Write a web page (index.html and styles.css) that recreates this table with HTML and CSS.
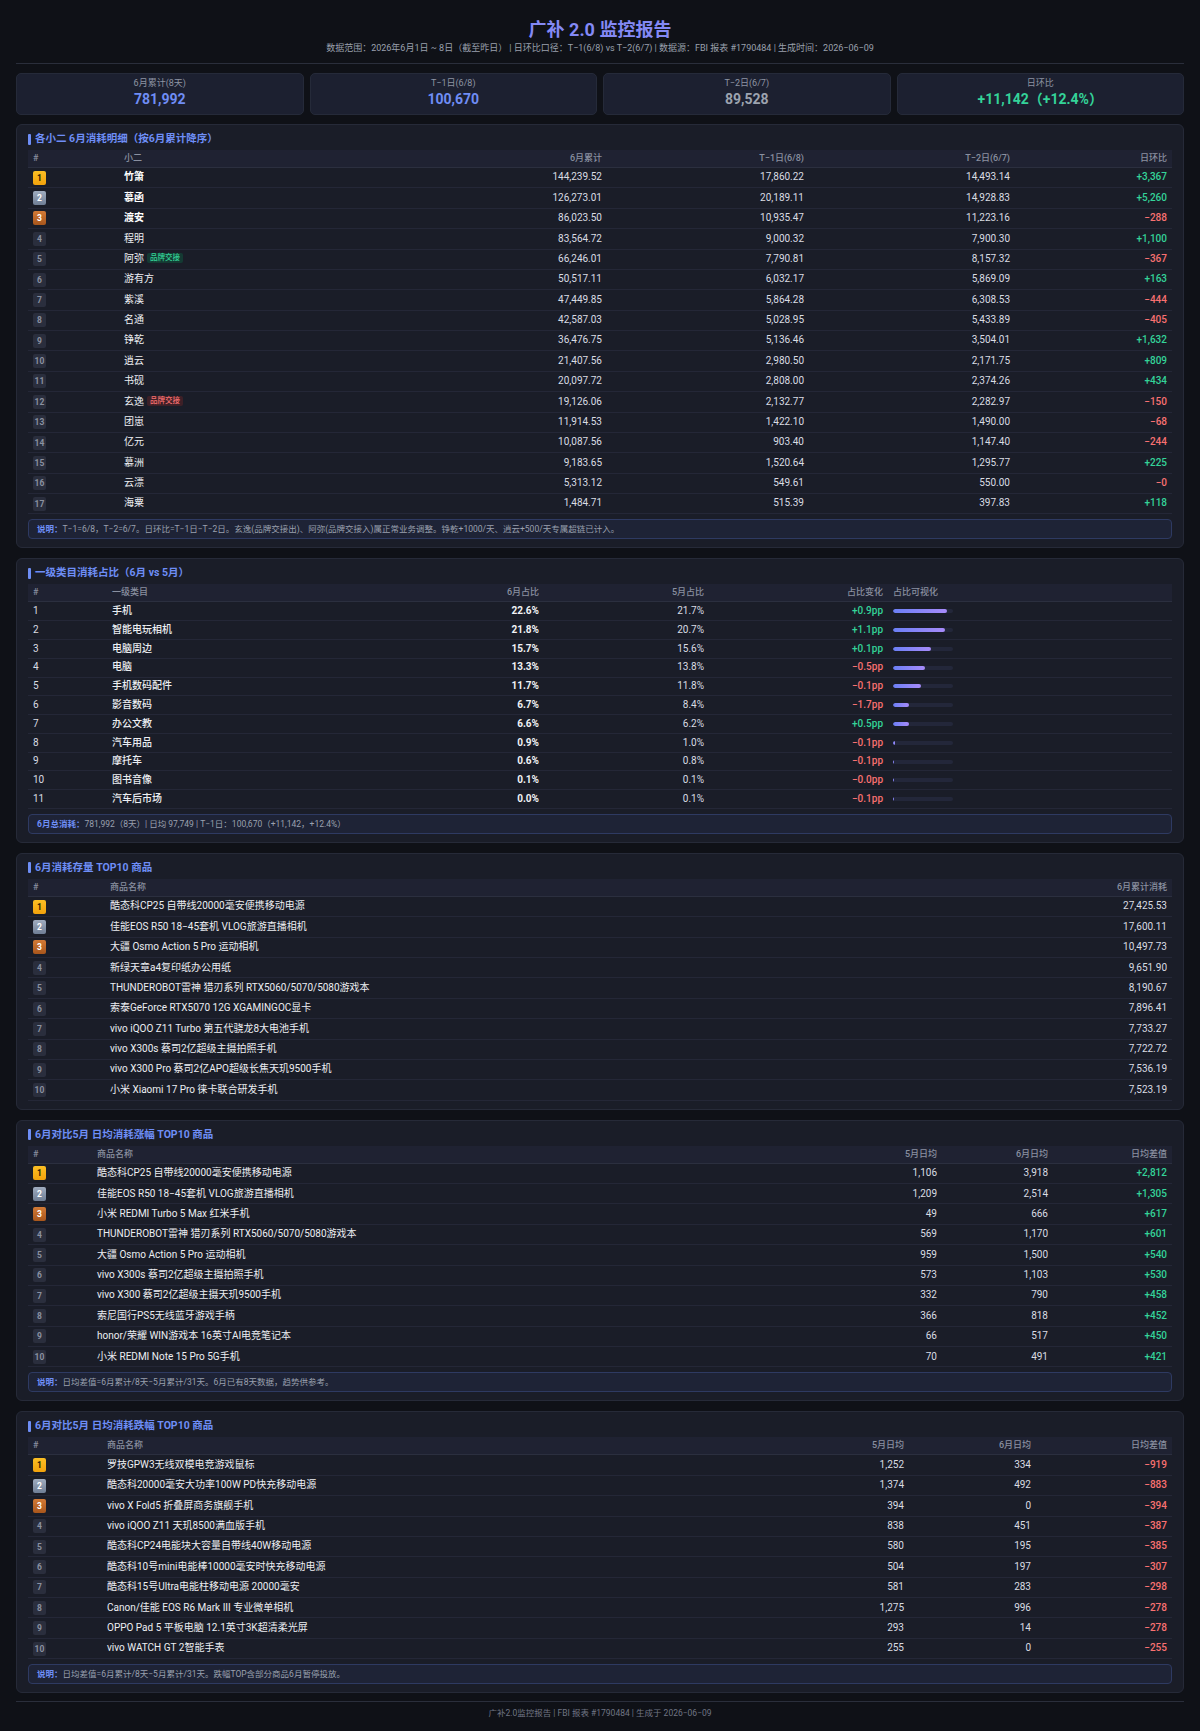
FILE: index.html
```html
<!DOCTYPE html>
<html lang="zh-CN">
<head>
<meta charset="utf-8">
<title>广补 2.0 监控报告</title>
<link rel="stylesheet" href="styles.css">
</head>
<body>
<header class="hdr">
  <h1 class="ttl">广补 2.0 监控报告</h1>
  <p class="sub">数据范围：2026年6月1日 ~ 8日（截至昨日） | 日环比口径：T−1(6/8) vs T−2(6/7) | 数据源：FBI 报表 #1790484 | 生成时间：2026−06−09</p>
</header>

<section class="kpis">
  <div class="kpi"><div class="kpi-l">6月累计(8天)</div><div class="kpi-v blue">781,992</div></div>
  <div class="kpi"><div class="kpi-l">T−1日(6/8)</div><div class="kpi-v blue">100,670</div></div>
  <div class="kpi"><div class="kpi-l">T−2日(6/7)</div><div class="kpi-v gray">89,528</div></div>
  <div class="kpi"><div class="kpi-l">日环比</div><div class="kpi-v up">+11,142（+12.4%）</div></div>
</section>

<section class="card">
  <h2 class="stitle">各小二 6月消耗明细（按6月累计降序）</h2>
  <table class="tbl">
    <colgroup><col class="a1"><col class="a2"><col class="a3"><col class="a4"><col class="a5"><col class="a6"></colgroup>
    <thead><tr><th>#</th><th>小二</th><th class="r">6月累计</th><th class="r">T−1日(6/8)</th><th class="r">T−2日(6/7)</th><th class="r">日环比</th></tr></thead>
    <tbody>
      <tr><td><span class="rk r1">1</span></td><td class="nm top">竹箫</td><td class="r">144,239.52</td><td class="r">17,860.22</td><td class="r">14,493.14</td><td class="r up">+3,367</td></tr>
      <tr><td><span class="rk r2">2</span></td><td class="nm top">慕函</td><td class="r">126,273.01</td><td class="r">20,189.11</td><td class="r">14,928.83</td><td class="r up">+5,260</td></tr>
      <tr><td><span class="rk r3">3</span></td><td class="nm top">渡安</td><td class="r">86,023.50</td><td class="r">10,935.47</td><td class="r">11,223.16</td><td class="r dn">−288</td></tr>
      <tr><td><span class="rk">4</span></td><td class="nm">程明</td><td class="r">83,564.72</td><td class="r">9,000.32</td><td class="r">7,900.30</td><td class="r up">+1,100</td></tr>
      <tr><td><span class="rk">5</span></td><td class="nm">阿弥<span class="tag tag-g">品牌交接</span></td><td class="r">66,246.01</td><td class="r">7,790.81</td><td class="r">8,157.32</td><td class="r dn">−367</td></tr>
      <tr><td><span class="rk">6</span></td><td class="nm">游有方</td><td class="r">50,517.11</td><td class="r">6,032.17</td><td class="r">5,869.09</td><td class="r up">+163</td></tr>
      <tr><td><span class="rk">7</span></td><td class="nm">紫溪</td><td class="r">47,449.85</td><td class="r">5,864.28</td><td class="r">6,308.53</td><td class="r dn">−444</td></tr>
      <tr><td><span class="rk">8</span></td><td class="nm">名通</td><td class="r">42,587.03</td><td class="r">5,028.95</td><td class="r">5,433.89</td><td class="r dn">−405</td></tr>
      <tr><td><span class="rk">9</span></td><td class="nm">铮乾</td><td class="r">36,476.75</td><td class="r">5,136.46</td><td class="r">3,504.01</td><td class="r up">+1,632</td></tr>
      <tr><td><span class="rk">10</span></td><td class="nm">逍云</td><td class="r">21,407.56</td><td class="r">2,980.50</td><td class="r">2,171.75</td><td class="r up">+809</td></tr>
      <tr><td><span class="rk">11</span></td><td class="nm">书砚</td><td class="r">20,097.72</td><td class="r">2,808.00</td><td class="r">2,374.26</td><td class="r up">+434</td></tr>
      <tr><td><span class="rk">12</span></td><td class="nm">玄逸<span class="tag tag-r">品牌交接</span></td><td class="r">19,126.06</td><td class="r">2,132.77</td><td class="r">2,282.97</td><td class="r dn">−150</td></tr>
      <tr><td><span class="rk">13</span></td><td class="nm">团崽</td><td class="r">11,914.53</td><td class="r">1,422.10</td><td class="r">1,490.00</td><td class="r dn">−68</td></tr>
      <tr><td><span class="rk">14</span></td><td class="nm">亿元</td><td class="r">10,087.56</td><td class="r">903.40</td><td class="r">1,147.40</td><td class="r dn">−244</td></tr>
      <tr><td><span class="rk">15</span></td><td class="nm">慕洲</td><td class="r">9,183.65</td><td class="r">1,520.64</td><td class="r">1,295.77</td><td class="r up">+225</td></tr>
      <tr><td><span class="rk">16</span></td><td class="nm">云漂</td><td class="r">5,313.12</td><td class="r">549.61</td><td class="r">550.00</td><td class="r dn">−0</td></tr>
      <tr><td><span class="rk">17</span></td><td class="nm">海粟</td><td class="r">1,484.71</td><td class="r">515.39</td><td class="r">397.83</td><td class="r up">+118</td></tr>
    </tbody>
  </table>
  <p class="note"><b>说明：</b>T−1=6/8，T−2=6/7。日环比=T−1日−T−2日。玄逸(品牌交接出)、阿弥(品牌交接入)属正常业务调整。铮乾+1000/天、逍云+500/天专属超链已计入。</p>
</section>

<section class="card">
  <h2 class="stitle">一级类目消耗占比（6月 vs 5月）</h2>
  <table class="tbl">
    <colgroup><col class="b1"><col class="b2"><col class="b3"><col class="b4"><col class="b5"><col class="b6"></colgroup>
    <thead><tr><th>#</th><th>一级类目</th><th class="r">6月占比</th><th class="r">5月占比</th><th class="r">占比变化</th><th>占比可视化</th></tr></thead>
    <tbody>
      <tr><td>1</td><td class="nm cat">手机</td><td class="r b">22.6%</td><td class="r">21.7%</td><td class="r up">+0.9pp</td><td><div class="bar"><div class="fill" style="width:90.4%"></div></div></td></tr>
      <tr><td>2</td><td class="nm cat">智能电玩相机</td><td class="r b">21.8%</td><td class="r">20.7%</td><td class="r up">+1.1pp</td><td><div class="bar"><div class="fill" style="width:87.2%"></div></div></td></tr>
      <tr><td>3</td><td class="nm cat">电脑周边</td><td class="r b">15.7%</td><td class="r">15.6%</td><td class="r up">+0.1pp</td><td><div class="bar"><div class="fill" style="width:62.8%"></div></div></td></tr>
      <tr><td>4</td><td class="nm cat">电脑</td><td class="r b">13.3%</td><td class="r">13.8%</td><td class="r dn">−0.5pp</td><td><div class="bar"><div class="fill" style="width:53.2%"></div></div></td></tr>
      <tr><td>5</td><td class="nm cat">手机数码配件</td><td class="r b">11.7%</td><td class="r">11.8%</td><td class="r dn">−0.1pp</td><td><div class="bar"><div class="fill" style="width:46.8%"></div></div></td></tr>
      <tr><td>6</td><td class="nm cat">影音数码</td><td class="r b">6.7%</td><td class="r">8.4%</td><td class="r dn">−1.7pp</td><td><div class="bar"><div class="fill" style="width:26.8%"></div></div></td></tr>
      <tr><td>7</td><td class="nm cat">办公文教</td><td class="r b">6.6%</td><td class="r">6.2%</td><td class="r up">+0.5pp</td><td><div class="bar"><div class="fill" style="width:26.4%"></div></div></td></tr>
      <tr><td>8</td><td class="nm cat">汽车用品</td><td class="r b">0.9%</td><td class="r">1.0%</td><td class="r dn">−0.1pp</td><td><div class="bar"><div class="fill" style="width:3.6%"></div></div></td></tr>
      <tr><td>9</td><td class="nm cat">摩托车</td><td class="r b">0.6%</td><td class="r">0.8%</td><td class="r dn">−0.1pp</td><td><div class="bar"><div class="fill" style="width:2.4%"></div></div></td></tr>
      <tr><td>10</td><td class="nm cat">图书音像</td><td class="r b">0.1%</td><td class="r">0.1%</td><td class="r dn">−0.0pp</td><td><div class="bar"><div class="fill" style="width:0.4%"></div></div></td></tr>
      <tr><td>11</td><td class="nm cat">汽车后市场</td><td class="r b">0.0%</td><td class="r">0.1%</td><td class="r dn">−0.1pp</td><td><div class="bar"><div class="fill" style="width:0.1%"></div></div></td></tr>
    </tbody>
  </table>
  <p class="note"><b>6月总消耗：</b>781,992（8天）| 日均 97,749 | T−1日：100,670（+11,142，+12.4%）</p>
</section>

<section class="card">
  <h2 class="stitle">6月消耗存量 TOP10 商品</h2>
  <table class="tbl">
    <colgroup><col class="c1"><col class="c2"><col class="c3"></colgroup>
    <thead><tr><th>#</th><th>商品名称</th><th class="r">6月累计消耗</th></tr></thead>
    <tbody>
      <tr><td><span class="rk r1">1</span></td><td class="nm">酷态科CP25 自带线20000毫安便携移动电源</td><td class="r">27,425.53</td></tr>
      <tr><td><span class="rk r2">2</span></td><td class="nm">佳能EOS R50 18−45套机 VLOG旅游直播相机</td><td class="r">17,600.11</td></tr>
      <tr><td><span class="rk r3">3</span></td><td class="nm">大疆 Osmo Action 5 Pro 运动相机</td><td class="r">10,497.73</td></tr>
      <tr><td><span class="rk">4</span></td><td class="nm">新绿天章a4复印纸办公用纸</td><td class="r">9,651.90</td></tr>
      <tr><td><span class="rk">5</span></td><td class="nm">THUNDEROBOT雷神 猎刃系列 RTX5060/5070/5080游戏本</td><td class="r">8,190.67</td></tr>
      <tr><td><span class="rk">6</span></td><td class="nm">索泰GeForce RTX5070 12G XGAMINGOC显卡</td><td class="r">7,896.41</td></tr>
      <tr><td><span class="rk">7</span></td><td class="nm">vivo iQOO Z11 Turbo 第五代骁龙8大电池手机</td><td class="r">7,733.27</td></tr>
      <tr><td><span class="rk">8</span></td><td class="nm">vivo X300s 蔡司2亿超级主摄拍照手机</td><td class="r">7,722.72</td></tr>
      <tr><td><span class="rk">9</span></td><td class="nm">vivo X300 Pro 蔡司2亿APO超级长焦天玑9500手机</td><td class="r">7,536.19</td></tr>
      <tr><td><span class="rk">10</span></td><td class="nm">小米 Xiaomi 17 Pro 徕卡联合研发手机</td><td class="r">7,523.19</td></tr>
    </tbody>
  </table>
</section>

<section class="card">
  <h2 class="stitle">6月对比5月 日均消耗涨幅 TOP10 商品</h2>
  <table class="tbl">
    <colgroup><col class="d1"><col class="d2"><col class="d3"><col class="d4"><col class="d5"></colgroup>
    <thead><tr><th>#</th><th>商品名称</th><th class="r">5月日均</th><th class="r">6月日均</th><th class="r">日均差值</th></tr></thead>
    <tbody>
      <tr><td><span class="rk r1">1</span></td><td class="nm">酷态科CP25 自带线20000毫安便携移动电源</td><td class="r">1,106</td><td class="r">3,918</td><td class="r up">+2,812</td></tr>
      <tr><td><span class="rk r2">2</span></td><td class="nm">佳能EOS R50 18−45套机 VLOG旅游直播相机</td><td class="r">1,209</td><td class="r">2,514</td><td class="r up">+1,305</td></tr>
      <tr><td><span class="rk r3">3</span></td><td class="nm">小米 REDMI Turbo 5 Max 红米手机</td><td class="r">49</td><td class="r">666</td><td class="r up">+617</td></tr>
      <tr><td><span class="rk">4</span></td><td class="nm">THUNDEROBOT雷神 猎刃系列 RTX5060/5070/5080游戏本</td><td class="r">569</td><td class="r">1,170</td><td class="r up">+601</td></tr>
      <tr><td><span class="rk">5</span></td><td class="nm">大疆 Osmo Action 5 Pro 运动相机</td><td class="r">959</td><td class="r">1,500</td><td class="r up">+540</td></tr>
      <tr><td><span class="rk">6</span></td><td class="nm">vivo X300s 蔡司2亿超级主摄拍照手机</td><td class="r">573</td><td class="r">1,103</td><td class="r up">+530</td></tr>
      <tr><td><span class="rk">7</span></td><td class="nm">vivo X300 蔡司2亿超级主摄天玑9500手机</td><td class="r">332</td><td class="r">790</td><td class="r up">+458</td></tr>
      <tr><td><span class="rk">8</span></td><td class="nm">索尼国行PS5无线蓝牙游戏手柄</td><td class="r">366</td><td class="r">818</td><td class="r up">+452</td></tr>
      <tr><td><span class="rk">9</span></td><td class="nm">honor/荣耀 WIN游戏本 16英寸AI电竞笔记本</td><td class="r">66</td><td class="r">517</td><td class="r up">+450</td></tr>
      <tr><td><span class="rk">10</span></td><td class="nm">小米 REDMI Note 15 Pro 5G手机</td><td class="r">70</td><td class="r">491</td><td class="r up">+421</td></tr>
    </tbody>
  </table>
  <p class="note"><b>说明：</b>日均差值=6月累计/8天−5月累计/31天。6月已有8天数据，趋势供参考。</p>
</section>

<section class="card last">
  <h2 class="stitle">6月对比5月 日均消耗跌幅 TOP10 商品</h2>
  <table class="tbl">
    <colgroup><col class="e1"><col class="e2"><col class="e3"><col class="e4"><col class="e5"></colgroup>
    <thead><tr><th>#</th><th>商品名称</th><th class="r">5月日均</th><th class="r">6月日均</th><th class="r">日均差值</th></tr></thead>
    <tbody>
      <tr><td><span class="rk r1">1</span></td><td class="nm">罗技GPW3无线双模电竞游戏鼠标</td><td class="r">1,252</td><td class="r">334</td><td class="r dn">−919</td></tr>
      <tr><td><span class="rk r2">2</span></td><td class="nm">酷态科20000毫安大功率100W PD快充移动电源</td><td class="r">1,374</td><td class="r">492</td><td class="r dn">−883</td></tr>
      <tr><td><span class="rk r3">3</span></td><td class="nm">vivo X Fold5 折叠屏商务旗舰手机</td><td class="r">394</td><td class="r">0</td><td class="r dn">−394</td></tr>
      <tr><td><span class="rk">4</span></td><td class="nm">vivo iQOO Z11 天玑8500满血版手机</td><td class="r">838</td><td class="r">451</td><td class="r dn">−387</td></tr>
      <tr><td><span class="rk">5</span></td><td class="nm">酷态科CP24电能块大容量自带线40W移动电源</td><td class="r">580</td><td class="r">195</td><td class="r dn">−385</td></tr>
      <tr><td><span class="rk">6</span></td><td class="nm">酷态科10号mini电能棒10000毫安时快充移动电源</td><td class="r">504</td><td class="r">197</td><td class="r dn">−307</td></tr>
      <tr><td><span class="rk">7</span></td><td class="nm">酷态科15号Ultra电能柱移动电源 20000毫安</td><td class="r">581</td><td class="r">283</td><td class="r dn">−298</td></tr>
      <tr><td><span class="rk">8</span></td><td class="nm">Canon/佳能 EOS R6 Mark III 专业微单相机</td><td class="r">1,275</td><td class="r">996</td><td class="r dn">−278</td></tr>
      <tr><td><span class="rk">9</span></td><td class="nm">OPPO Pad 5 平板电脑 12.1英寸3K超清柔光屏</td><td class="r">293</td><td class="r">14</td><td class="r dn">−278</td></tr>
      <tr><td><span class="rk">10</span></td><td class="nm">vivo WATCH GT 2智能手表</td><td class="r">255</td><td class="r">0</td><td class="r dn">−255</td></tr>
    </tbody>
  </table>
  <p class="note"><b>说明：</b>日均差值=6月累计/8天−5月累计/31天。跌幅TOP含部分商品6月暂停投放。</p>
</section>

<footer class="ftr">广补2.0监控报告 | FBI 报表 #1790484 | 生成于 2026−06−09</footer>
</body>
</html>
```

FILE: styles.css
```css
* { box-sizing: border-box; margin: 0; padding: 0; }

body {
  background: #0f1117;
  color: #d9dce3;
  font-family: Roboto, "Noto Sans CJK SC", sans-serif;
  padding: 18px 16px 0;
}

.hdr {
  text-align: center;
  border-bottom: 1px solid #2a2e3b;
  padding-bottom: 8px;
  margin-bottom: 9px;
}
.ttl {
  font-size: 18px;
  line-height: 24px;
  font-weight: 700;
  color: #8489f5;
}
.sub {
  font-size: 9px;
  line-height: 13px;
  color: #9aa0ad;
}

.kpis {
  display: grid;
  grid-template-columns: repeat(4, 1fr);
  gap: 6px;
  margin-bottom: 9px;
}
.kpi {
  background: #1c2030;
  border: 1px solid #252a39;
  border-radius: 5px;
  text-align: center;
  padding: 4px 8px 6px;
}
.kpi-l {
  font-size: 9px;
  line-height: 11px;
  color: #8e94a3;
}
.kpi-v {
  font-size: 14px;
  line-height: 18px;
  font-weight: 700;
  margin-top: 1px;
}
.blue { color: #6f8df5; }
.gray { color: #9ca3af; }

.card {
  background: #1a1d28;
  border: 1px solid #262a38;
  border-radius: 6px;
  padding: 7px 11px 8px;
  margin-bottom: 10px;
}
.card.last { margin-bottom: 8px; }

.stitle {
  display: flex;
  align-items: center;
  font-size: 10.5px;
  line-height: 14px;
  font-weight: 700;
  color: #6e8ef6;
  margin-bottom: 4px;
}
.stitle::before {
  content: "";
  width: 3px;
  height: 11px;
  background: #6e8ef6;
  border-radius: 1px;
  margin-right: 4px;
}

.tbl {
  width: 100%;
  border-collapse: collapse;
  table-layout: fixed;
  font-size: 10px;
}
.tbl th {
  background: #1f2232;
  color: #8a90a0;
  font-weight: 500;
  font-size: 9px;
  line-height: 11px;
  padding: 3px 5px;
  text-align: left;
  border-bottom: 1px solid #2b2f3f;
  white-space: nowrap;
}
.tbl td {
  padding: 2.7px 5px;
  line-height: 12.4px;
  border-bottom: 1px solid #242737;
  color: #d9dce3;
  white-space: nowrap;
  vertical-align: middle;
}
.tbl th.r, .tbl td.r { text-align: right; }
.tbl td.nm { color: #eceef2; font-weight: 400; }
.tbl td.cat { font-weight: 500; }
.tbl td.top { color: #ffffff; font-weight: 700; }
.tbl td.b { color: #f1f2f5; font-weight: 700; }
.tbl td.up, .kpi-v.up { color: #34d399; }
.tbl td.dn { color: #f87171; }
.tbl td.up, .tbl td.dn { font-weight: 500; }

/* column widths */
.a1 { width: 91px; } .a2 { width: 250px; } .a3 { width: 238px; }
.a4 { width: 202px; } .a5 { width: 206px; } .a6 { width: 157px; }
.b1 { width: 79px; } .b2 { width: 272px; } .b3 { width: 165px; }
.b4 { width: 165px; } .b5 { width: 179px; } .b6 { width: 284px; }
.c1 { width: 77px; } .c2 { width: 917px; } .c3 { width: 150px; }
.d1 { width: 64px; } .d2 { width: 738px; } .d3 { width: 112px; }
.d4 { width: 111px; } .d5 { width: 119px; }
.e1 { width: 74px; } .e2 { width: 678px; } .e3 { width: 129px; }
.e4 { width: 127px; } .e5 { width: 136px; }

.rk {
  display: flex;
  align-items: center;
  justify-content: center;
  width: 13px;
  height: 14px;
  border-radius: 2px;
  background: #2a2e3d;
  color: #8b91a0;
  font-size: 8.5px;
  font-weight: 700;
  line-height: 14px;
}
.rk.r1 { background: linear-gradient(180deg, #fbbf24, #f2a20c); color: #2a1c00; }
.rk.r2 { background: linear-gradient(180deg, #a0acbf, #6f7e95); color: #ffffff; }
.rk.r3 { background: linear-gradient(180deg, #d27a36, #a8561c); color: #ffffff; }

.tag {
  display: inline-block;
  vertical-align: middle;
  margin-left: 3px;
  padding: 0 3px;
  font-size: 7.5px;
  line-height: 10px;
  border-radius: 2px;
  font-weight: 500;
  position: relative;
  top: -1px;
}
.tag-g { background: #143a33; color: #34d399; }
.tag-r { background: #3d2027; color: #f87171; }

.bar {
  width: 60px;
  height: 4px;
  background: #23273a;
  border-radius: 2px;
  overflow: hidden;
}
.fill {
  height: 100%;
  min-width: 1px;
  border-radius: 2px;
  background: linear-gradient(90deg, #6b7ff5, #a78bfa);
}

.note {
  margin-top: 5px;
  background: #1e2336;
  border: 1px solid #2e3a62;
  border-radius: 4px;
  padding: 0 8px;
  font-size: 8.5px;
  line-height: 18px;
  color: #9aa0ae;
}
.note b { color: #6e8ef6; font-weight: 700; }

.ftr {
  border-top: 1px solid #2a2e3b;
  text-align: center;
  font-size: 8.5px;
  line-height: 12px;
  color: #6f7584;
  padding: 5px 0 11px;
}
```
